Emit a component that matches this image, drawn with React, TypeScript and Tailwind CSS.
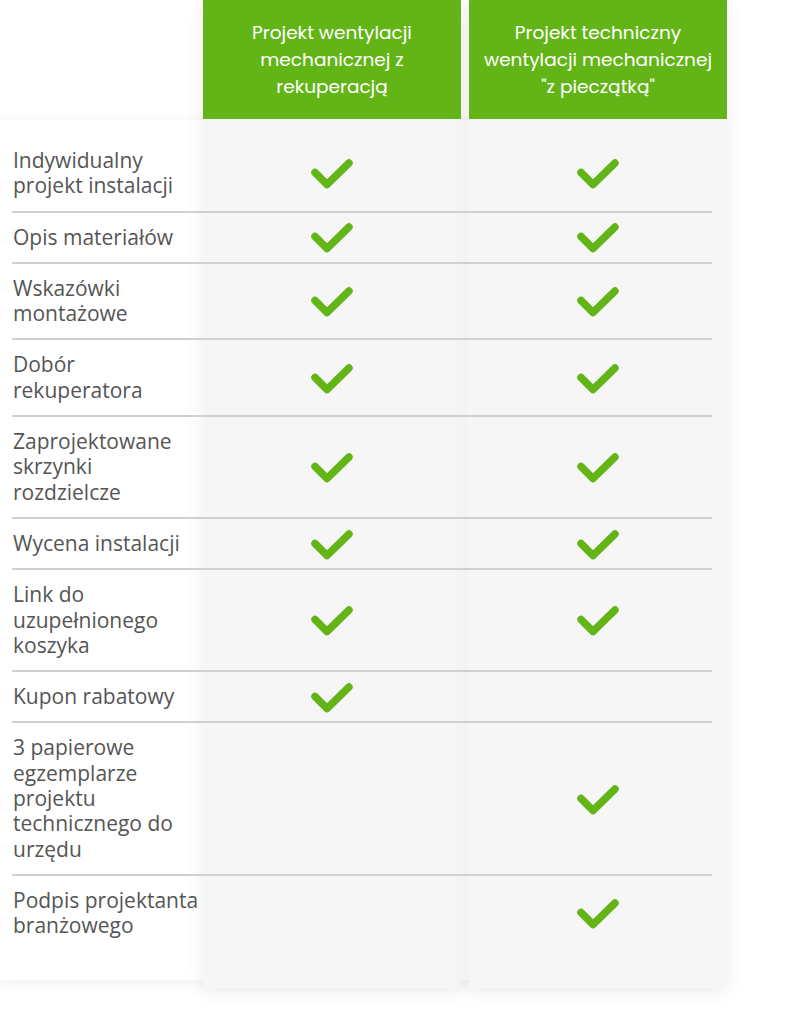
import React from "react";

type Row = { label: string[]; a: boolean; b: boolean };

const rows: Row[] = [
  { label: ["Indywidualny", "projekt instalacji"], a: true, b: true },
  { label: ["Opis materiałów"], a: true, b: true },
  { label: ["Wskazówki", "montażowe"], a: true, b: true },
  { label: ["Dobór", "rekuperatora"], a: true, b: true },
  { label: ["Zaprojektowane", "skrzynki", "rozdzielcze"], a: true, b: true },
  { label: ["Wycena instalacji"], a: true, b: true },
  { label: ["Link do", "uzupełnionego", "koszyka"], a: true, b: true },
  { label: ["Kupon rabatowy"], a: true, b: false },
  {
    label: ["3 papierowe", "egzemplarze", "projektu", "technicznego do", "urzędu"],
    a: false,
    b: true,
  },
  { label: ["Podpis projektanta", "branżowego"], a: false, b: true },
];

const Check = () => (
  <svg width="44" height="34" viewBox="0 0 44 34" fill="none" className="shrink-0">
    <polyline
      points="5,16.5 17,28.5 39,7"
      stroke="#63b517"
      strokeWidth="7.5"
      strokeLinecap="round"
      strokeLinejoin="round"
    />
  </svg>
);

const Header = ({ lines }: { lines: string[] }) => (
  <div className="w-[258px] h-[119px] bg-[#63b517] flex flex-col items-center justify-center text-center text-white text-[18.5px] leading-[27px] font-['Poppins','Inter',sans-serif]">
    {lines.map((l) => (
      <span key={l} className="whitespace-nowrap">
        {l}
      </span>
    ))}
  </div>
);

export default function App() {
  return (
    <div className="relative w-[790px] h-[1024px] bg-white overflow-hidden font-['Open_Sans',sans-serif]">
      {/* column cards */}
      <div className="absolute left-[203px] top-0 w-[258px] h-[988px] bg-[#f6f6f6] shadow-[0_4px_18px_rgba(0,0,0,0.07)] z-[1]" />
      <div className="absolute left-[469px] top-0 w-[258px] h-[988px] bg-[#f6f6f6] shadow-[0_4px_18px_rgba(0,0,0,0.07)] z-[1]" />

      {/* headers */}
      <div className="relative z-10 flex gap-2 pl-[203px]">
        <Header lines={["Projekt wentylacji", "mechanicznej z", "rekuperacją"]} />
        <Header lines={["Projekt techniczny", "wentylacji mechanicznej", "\"z pieczątką\""]} />
      </div>

      {/* body panel */}
      <div className="mt-px w-[720px] h-[860px] bg-white shadow-[0_2px_14px_rgba(0,0,0,0.07)] pt-4">
        {rows.map((r, i) => (
          <div
            key={i}
            className={`relative z-10 ml-3 w-[700px] grid grid-cols-[191px_258px_8px_243px] items-center py-[12px] ${
              i < rows.length - 1 ? "border-b-2 border-[#d0d0d0]" : ""
            }`}
          >
            <div className="flex flex-col pl-px text-[21px] leading-[25.3px] text-[#555555]">
              {r.label.map((l) => (
                <span key={l} className="whitespace-nowrap">
                  {l}
                </span>
              ))}
            </div>
            <div className="h-0 flex items-center justify-center">{r.a && <Check />}</div>
            <div />
            <div className="h-0 flex items-center justify-center pl-[15px]">{r.b && <Check />}</div>
          </div>
        ))}
      </div>
    </div>
  );
}
